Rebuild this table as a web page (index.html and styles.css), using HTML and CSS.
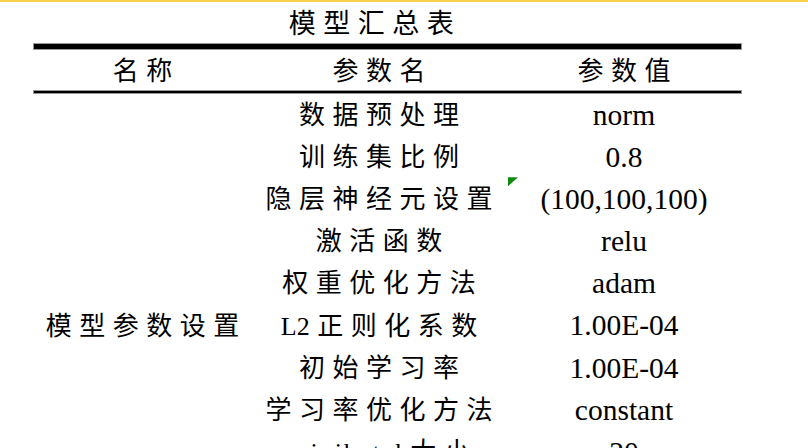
FILE: index.html
```html
<!DOCTYPE html>
<html lang="zh-CN">
<head>
<meta charset="utf-8">
<title>模型汇总表</title>
<link rel="stylesheet" href="styles.css">
</head>
<body>
<div class="top-bar"></div>
<div class="sheet">
  <div class="title"><span class="cjk">模型汇总表</span></div>
  <div class="rule thick"></div>
  <div class="grid head">
    <div class="cell"><span class="cjk">名称</span></div>
    <div class="cell"><span class="cjk">参数名</span></div>
    <div class="cell"><span class="cjk">参数值</span></div>
  </div>
  <div class="rule thin"></div>
  <div class="grid body">
    <div class="cell group"><span class="cjk">模型参数设置</span></div>
    <div class="cell"><span class="cjk">数据预处理</span></div><div class="cell val">norm</div>
    <div class="cell"><span class="cjk">训练集比例</span></div><div class="cell val">0.8</div>
    <div class="cell"><span class="cjk">隐层神经元设置</span></div><div class="cell val flagged"><span class="flag"></span>(100,100,100)</div>
    <div class="cell"><span class="cjk">激活函数</span></div><div class="cell val">relu</div>
    <div class="cell"><span class="cjk">权重优化方法</span></div><div class="cell val">adam</div>
    <div class="cell"><span class="cjk"><span class="tight">L</span>2正则化系数</span></div><div class="cell val">1.00E-04</div>
    <div class="cell"><span class="cjk">初始学习率</span></div><div class="cell val">1.00E-04</div>
    <div class="cell"><span class="cjk">学习率优化方法</span></div><div class="cell val">constant</div>
    <div class="cell"><span class="cjk"><span class="latin">minibatch</span>大小</span></div><div class="cell val">20</div>
  </div>
</div>
</body>
</html>
```

FILE: styles.css
```css
html, body {
  margin: 0;
  padding: 0;
  background: #ffffff;
}
body {
  width: 808px;
  height: 448px;
  overflow: hidden;
  color: #000;
  font-family: "Liberation Serif", "Noto Sans CJK SC", serif;
}
.top-bar {
  height: 2px;
  background: #f8d24b;
}
.sheet {
  margin-left: 34px;
  width: 707px;
}
.title {
  height: 42px;
  box-sizing: border-box;
  padding-bottom: 3px;
  display: flex;
  align-items: center;
  justify-content: center;
  padding-right: 32px;
  font-size: 27px;
  letter-spacing: 6.8px;
}
.title .cjk {
  padding-left: 6.8px;
}
.rule {
  background: #000;
  box-shadow: 0 0 0 1px rgba(0, 0, 0, 0.4);
}
.rule.thick {
  height: 5px;
}
.rule.thin {
  height: 2px;
}
.grid {
  display: grid;
  grid-template-columns: 217px 256px 234px;
}
.head {
  height: 42px;
}
.head .cell {
  padding-top: 4px;
}
.body {
  grid-auto-rows: 42.14px;
}
.cell {
  box-sizing: border-box;
  display: flex;
  align-items: center;
  justify-content: center;
  white-space: nowrap;
  font-size: 26px;
  line-height: 1.2;
}
.body .cell {
  padding-top: 3px;
}
.cjk {
  letter-spacing: 7.5px;
  padding-left: 7.5px;
}
.tight {
  letter-spacing: 0;
}
.latin {
  letter-spacing: 2px;
}
.group {
  grid-column: 1;
  grid-row: 1 / span 11;
}
.val {
  grid-column: 3;
  font-size: 29.5px;
}
.body .cell:not(.group):not(.val) {
  grid-column: 2;
}
.flagged {
  position: relative;
}
.flag {
  position: absolute;
  left: 1px;
  top: 0;
  width: 10px;
  height: 9px;
  background: #0f8a0f;
  clip-path: polygon(0 0, 100% 0, 0 100%);
}
```
